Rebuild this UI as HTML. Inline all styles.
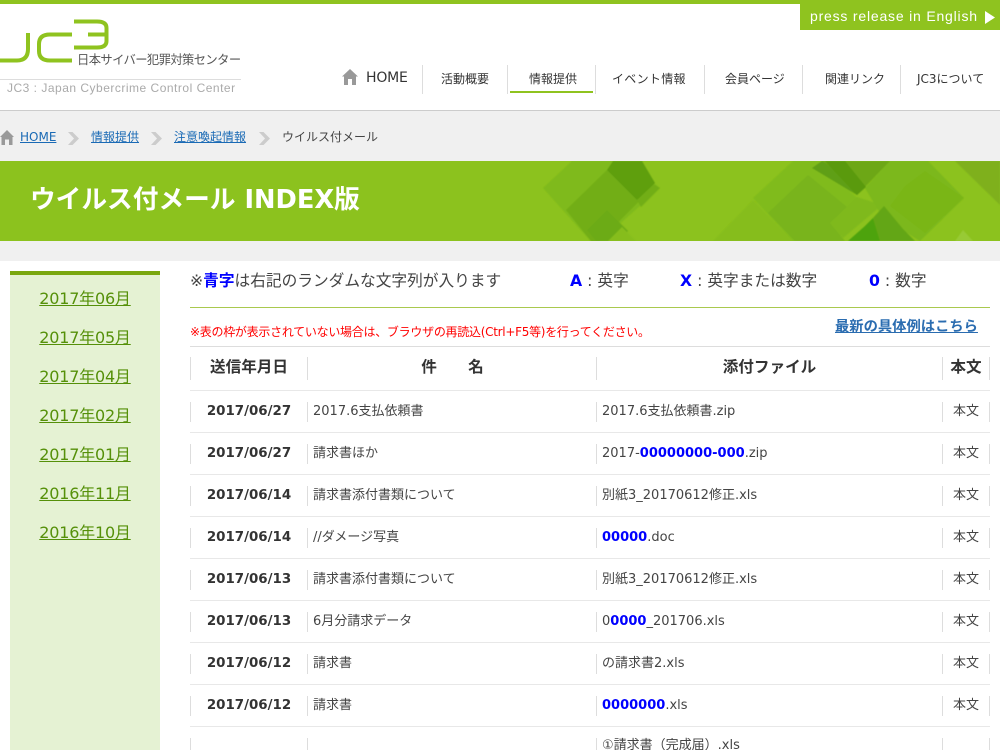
<!DOCTYPE html>
<html lang="ja"><head><meta charset="utf-8"><title>ウイルス付メール INDEX版</title>
<style>
html,body{margin:0;padding:0;width:1000px;height:750px;overflow:hidden;background:#fff}
body{position:relative;font-family:"DejaVu Sans","Noto Sans CJK JP",sans-serif;color:#333}
.a{position:absolute;white-space:nowrap}
.nav{font-size:12px;top:71px;line-height:17px;color:#333}
.sep{position:absolute;width:1px;background:#ddd}
.bc{font-size:12px;top:128px;line-height:18px}
.bc a{color:#1a6ab5;text-decoration:underline}
.sd{position:absolute;left:10px;width:150px;text-align:center;font-size:16px;line-height:24px;letter-spacing:-.2px}
.sd a{color:#559009;text-decoration:underline}
.hl{position:absolute;left:190px;width:800px;height:1px;background:#e8e8e8}
.t{position:absolute;font-size:13px;line-height:20px;white-space:nowrap;color:#444}
.d{position:absolute;left:190px;width:118px;text-align:center;font-size:13.4px;font-weight:bold;line-height:20px;color:#333}
.b{position:absolute;left:943px;width:46px;text-align:center;font-size:13px;line-height:20px;color:#444}
.t b{color:#00f}
.v{position:absolute;width:1px;height:20px;background:#ddd}
.h{position:absolute;font-size:15.6px;font-weight:bold;line-height:22px;text-align:center;top:356px;color:#333}
.n{font-size:15.7px;line-height:22px;color:#444;top:270px}
.n b{color:#00f}
</style></head><body>
<div class="a" style="left:0;top:0;width:1000px;height:4px;background:#8fc31f"></div>
<div class="a" style="left:800px;top:4px;width:200px;height:26px;background:#8fc31f"></div>
<div class="a" style="left:810px;top:8px;font:14px/17px 'Liberation Sans',sans-serif;letter-spacing:.8px;color:#fff">press release in English</div>
<svg class="a" style="left:985px;top:11px" width="10" height="13"><path d="M0 0L10 6.500L0 13Z" fill="#fff"/></svg>

<svg class="a" style="left:0;top:18px" width="112" height="46" fill="none" stroke="#8fc31f" stroke-width="4">
<path d="M0 42.500H17Q28 42.500 28 31V15"/>
<path d="M72 16.500H50Q39 16.500 39 26V33Q39 42.500 50 42.500H72"/>
<path d="M74 3.500H97Q106.500 3.500 106.500 10V23Q106.500 29.500 97 29.500H74"/>
<path d="M88 16.500H106"/>
</svg>
<div class="a" style="left:77px;top:52px;font-size:12.3px;line-height:17px;color:#555;letter-spacing:-.6px">日本サイバー犯罪対策センター</div>
<div class="a" style="left:0;top:79px;width:241px;height:1px;background:#ddd"></div>
<div class="a" style="left:7px;top:81px;font:12px/15px 'Liberation Sans',sans-serif;letter-spacing:.5px;color:#aaa">JC3 : Japan Cybercrime Control Center</div>

<svg class="a" style="left:342px;top:69px" width="16" height="16"><path d="M8 0L16 7.500H14V16H10V10H6V16H2V7.500H0Z" fill="#999"/></svg>
<div class="a" style="left:366px;top:69px;font:14px/18px 'DejaVu Sans',sans-serif;color:#333;letter-spacing:-.2px">HOME</div>
<div class="a nav" style="left:441px">活動概要</div>
<div class="a nav" style="left:529px">情報提供</div>
<div class="a nav" style="left:612px;letter-spacing:.3px">イベント情報</div>
<div class="a nav" style="left:725px">会員ページ</div>
<div class="a nav" style="left:825px">関連リンク</div>
<div class="a nav" style="left:917px">JC3について</div>
<div class="sep" style="left:422px;top:65px;height:29px"></div>
<div class="sep" style="left:507px;top:65px;height:29px"></div>
<div class="sep" style="left:595px;top:65px;height:29px"></div>
<div class="sep" style="left:704px;top:65px;height:29px"></div>
<div class="sep" style="left:802px;top:65px;height:29px"></div>
<div class="sep" style="left:900px;top:65px;height:29px"></div>
<div class="a" style="left:510px;top:91px;width:83px;height:2px;background:#8fc31f"></div>

<div class="a" style="left:0;top:110px;width:1000px;height:1px;background:#ccc"></div>
<div class="a" style="left:0;top:111px;width:1000px;height:50px;background:#f0f0f0"></div>
<svg class="a" style="left:0;top:130px" width="14" height="16"><path d="M7 0L14 7H12.500V15H9V9.500H5V15H1.500V7H0Z" fill="#999"/></svg>
<div class="a bc" style="left:20px"><a>HOME</a></div>
<div class="a bc" style="left:91px"><a>情報提供</a></div>
<div class="a bc" style="left:174px"><a>注意喚起情報</a></div>
<div class="a bc" style="left:282px;color:#444">ウイルス付メール</div>
<svg class="a" style="left:68px;top:132px" width="12" height="13"><path d="M0 0H4.500L11 6.500L4.500 13H0L6 6.500Z" fill="#ccc"/></svg>
<svg class="a" style="left:151px;top:132px" width="12" height="13"><path d="M0 0H4.500L11 6.500L4.500 13H0L6 6.500Z" fill="#ccc"/></svg>
<svg class="a" style="left:259px;top:132px" width="12" height="13"><path d="M0 0H4.500L11 6.500L4.500 13H0L6 6.500Z" fill="#ccc"/></svg>

<svg class="a" style="left:0;top:161px" width="1000" height="80" viewBox="0 0 1000 80">
<defs><filter id="s" x="-5%" y="-5%" width="110%" height="110%"><feGaussianBlur stdDeviation=".6"/></filter></defs>
<rect width="1000" height="80" fill="#8cc21e"/>
<g filter="url(#s)">
<path d="M543 27L572 0H630L660 27L595 85Z" fill="#7fba1b"/>
<path d="M566 49L607 9L655 24L595 85Z" fill="#72ae15"/>
<path d="M613 0H642L655 22L637 39L607 9Z" fill="#5f9f10"/>
<path d="M637 39L655 24L660 27L641 46Z" fill="#72ae15"/>
<path d="M587 69L607 49L628 70L618 80H596Z" fill="#6cab14"/>
<path d="M608 80L622 66L636 80Z" fill="#86bd1e"/>
<path d="M753 37L793 0H820L870 50L835 80H793Z" fill="#80bb1b"/>
<path d="M768 52L808 14L847 46L830 62L845 80H795Z" fill="#79b41a"/>
<path d="M713 80L753 39L793 80Z" fill="#86bd1e"/>
<path d="M822 0H890L865 26Z" fill="#6da715"/>
<path d="M812 7L822 0L865 26L857 34Z" fill="#5f9f12"/>
<path d="M825 0H845L866 26L857 34Z" fill="#5a9a10"/>
<path d="M830 62L857 36L882 44L843 77Z" fill="#7fb91f"/>
<path d="M890 0H928L964 37L920 80L883 57L865 27Z" fill="#7cb81b"/>
<path d="M905 25L925 10L964 37L925 72L890 45Z" fill="#7ab619"/>
<path d="M873 57L884 45L903 68L915 80H880Z" fill="#64a612"/>
<path d="M848 80L865 65L873 57L880 80Z" fill="#4da30c"/>
<path d="M955 0H1000V44Z" fill="#7fb01e"/>
<path d="M955 80L963 69L973 80Z" fill="#98ca36"/>
</g>
</svg>
<div class="a" style="left:30px;top:181px;font-size:25.700px;line-height:38px;font-weight:bold;color:#fff">ウイルス付メール INDEX版</div>
<div class="a" style="left:0;top:241px;width:1000px;height:20px;background:#f0f0f0"></div>

<div class="a" style="left:10px;top:271px;width:150px;height:479px;background:#e5f2d3"></div>
<div class="a" style="left:10px;top:271px;width:150px;height:4px;background:#7aa80f"></div>
<div class="sd" style="top:287px"><a>2017年06月</a></div>
<div class="sd" style="top:326px"><a>2017年05月</a></div>
<div class="sd" style="top:365px"><a>2017年04月</a></div>
<div class="sd" style="top:404px"><a>2017年02月</a></div>
<div class="sd" style="top:443px"><a>2017年01月</a></div>
<div class="sd" style="top:482px"><a>2016年11月</a></div>
<div class="sd" style="top:521px"><a>2016年10月</a></div>

<div class="a n" style="left:190px">※<b>青字</b>は右記のランダムな文字列が入ります</div>
<div class="a n" style="left:570px"><b>A</b> : 英字</div>
<div class="a n" style="left:680px"><b>X</b> : 英字または数字</div>
<div class="a n" style="left:869px"><b>0</b> : 数字</div>
<div class="a" style="left:190px;top:307px;width:800px;height:1px;background:#a9c94e"></div>
<div class="a" style="left:190px;top:323px;font-size:12px;line-height:18px;color:#f00;letter-spacing:-.28px">※表の枠が表示されていない場合は、ブラウザの再読込(Ctrl+F5等)を行ってください。</div>
<div class="a" style="left:835px;top:317px;font-size:14.300px;line-height:20px;font-weight:bold;color:#2a6cb0;text-decoration:underline">最新の具体例はこちら</div>
<div class="a" style="left:190px;top:346px;width:800px;height:1px;background:#ddd"></div>

<div class="h" style="left:190px;width:118px">送信年月日</div>
<div class="h" style="left:308px;width:289px">件　　名</div>
<div class="h" style="left:597px;width:345px">添付ファイル</div>
<div class="h" style="left:943px;width:46px">本文</div>
<div class="v" style="left:190px;top:357px;height:23px"></div><div class="v" style="left:307px;top:357px;height:23px"></div><div class="v" style="left:596px;top:357px;height:23px"></div><div class="v" style="left:942px;top:357px;height:23px"></div><div class="v" style="left:989px;top:357px;height:23px"></div>
<div class="hl" style="top:390px"></div>

<div class="v" style="left:190px;top:402px"></div><div class="v" style="left:307px;top:402px"></div><div class="v" style="left:596px;top:402px"></div><div class="v" style="left:942px;top:402px"></div><div class="v" style="left:989px;top:402px"></div>
<div class="d" style="top:402px">2017/06/27</div><div class="t" style="left:313px;top:402px">2017.6支払依頼書</div><div class="t" style="left:602px;top:402px">2017.6支払依頼書.zip</div><div class="b" style="top:402px">本文</div>
<div class="hl" style="top:432px"></div>

<div class="v" style="left:190px;top:444px"></div><div class="v" style="left:307px;top:444px"></div><div class="v" style="left:596px;top:444px"></div><div class="v" style="left:942px;top:444px"></div><div class="v" style="left:989px;top:444px"></div>
<div class="d" style="top:444px">2017/06/27</div><div class="t" style="left:313px;top:444px">請求書ほか</div><div class="t" style="left:602px;top:444px">2017-<b>00000000-000</b>.zip</div><div class="b" style="top:444px">本文</div>
<div class="hl" style="top:474px"></div>

<div class="v" style="left:190px;top:486px"></div><div class="v" style="left:307px;top:486px"></div><div class="v" style="left:596px;top:486px"></div><div class="v" style="left:942px;top:486px"></div><div class="v" style="left:989px;top:486px"></div>
<div class="d" style="top:486px">2017/06/14</div><div class="t" style="left:313px;top:486px">請求書添付書類について</div><div class="t" style="left:602px;top:486px">別紙3_20170612修正.xls</div><div class="b" style="top:486px">本文</div>
<div class="hl" style="top:516px"></div>

<div class="v" style="left:190px;top:528px"></div><div class="v" style="left:307px;top:528px"></div><div class="v" style="left:596px;top:528px"></div><div class="v" style="left:942px;top:528px"></div><div class="v" style="left:989px;top:528px"></div>
<div class="d" style="top:528px">2017/06/14</div><div class="t" style="left:313px;top:528px">//ダメージ写真</div><div class="t" style="left:602px;top:528px"><b>00000</b>.doc</div><div class="b" style="top:528px">本文</div>
<div class="hl" style="top:558px"></div>

<div class="v" style="left:190px;top:570px"></div><div class="v" style="left:307px;top:570px"></div><div class="v" style="left:596px;top:570px"></div><div class="v" style="left:942px;top:570px"></div><div class="v" style="left:989px;top:570px"></div>
<div class="d" style="top:570px">2017/06/13</div><div class="t" style="left:313px;top:570px">請求書添付書類について</div><div class="t" style="left:602px;top:570px">別紙3_20170612修正.xls</div><div class="b" style="top:570px">本文</div>
<div class="hl" style="top:600px"></div>

<div class="v" style="left:190px;top:612px"></div><div class="v" style="left:307px;top:612px"></div><div class="v" style="left:596px;top:612px"></div><div class="v" style="left:942px;top:612px"></div><div class="v" style="left:989px;top:612px"></div>
<div class="d" style="top:612px">2017/06/13</div><div class="t" style="left:313px;top:612px">6月分請求データ</div><div class="t" style="left:602px;top:612px">0<b>0000</b>_201706.xls</div><div class="b" style="top:612px">本文</div>
<div class="hl" style="top:642px"></div>

<div class="v" style="left:190px;top:654px"></div><div class="v" style="left:307px;top:654px"></div><div class="v" style="left:596px;top:654px"></div><div class="v" style="left:942px;top:654px"></div><div class="v" style="left:989px;top:654px"></div>
<div class="d" style="top:654px">2017/06/12</div><div class="t" style="left:313px;top:654px">請求書</div><div class="t" style="left:602px;top:654px">の請求書2.xls</div><div class="b" style="top:654px">本文</div>
<div class="hl" style="top:684px"></div>

<div class="v" style="left:190px;top:696px"></div><div class="v" style="left:307px;top:696px"></div><div class="v" style="left:596px;top:696px"></div><div class="v" style="left:942px;top:696px"></div><div class="v" style="left:989px;top:696px"></div>
<div class="d" style="top:696px">2017/06/12</div><div class="t" style="left:313px;top:696px">請求書</div><div class="t" style="left:602px;top:696px"><b>0000000</b>.xls</div><div class="b" style="top:696px">本文</div>
<div class="hl" style="top:726px"></div>

<div class="v" style="left:190px;top:738px;height:12px"></div><div class="v" style="left:307px;top:738px;height:12px"></div><div class="v" style="left:596px;top:738px;height:12px"></div><div class="v" style="left:942px;top:738px;height:12px"></div><div class="v" style="left:989px;top:738px;height:12px"></div>
<div class="t" style="left:319px;top:749px">請求書</div><div class="t" style="left:602px;top:736px">①請求書（完成届）.xls</div><div class="b" style="top:749px">本文</div>
</body></html>
